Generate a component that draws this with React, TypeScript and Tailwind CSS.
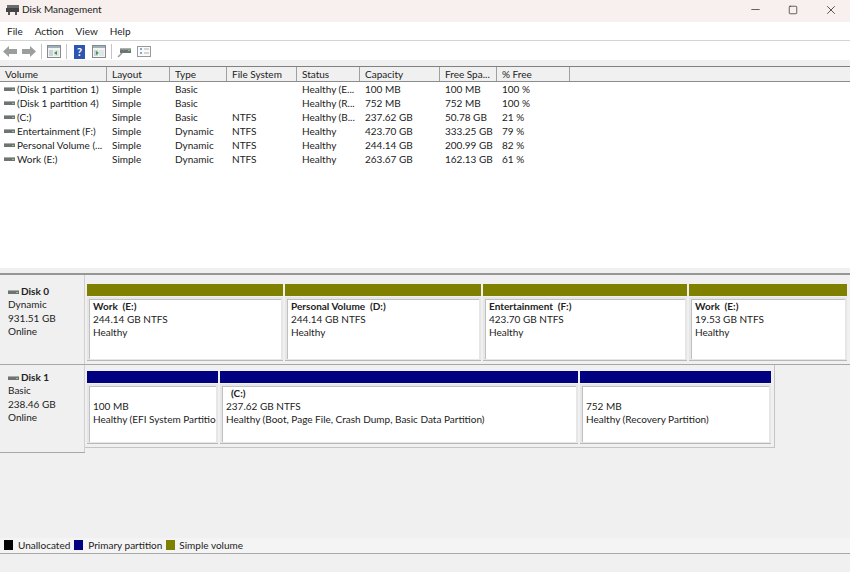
import { Minus, Square, X } from 'lucide-react';

const COLUMNS = [
  { label: 'Volume', width: 'w-[107px]' },
  { label: 'Layout', width: 'w-[63px]' },
  { label: 'Type', width: 'w-[57px]' },
  { label: 'File System', width: 'w-[70px]' },
  { label: 'Status', width: 'w-[63px]' },
  { label: 'Capacity', width: 'w-[80px]' },
  { label: 'Free Spa...', width: 'w-[57px]' },
  { label: '% Free', width: 'w-[73px]' },
];

const VOLUMES = [
  ['(Disk 1 partition 1)', 'Simple', 'Basic', '', 'Healthy (E...', '100 MB', '100 MB', '100 %'],
  ['(Disk 1 partition 4)', 'Simple', 'Basic', '', 'Healthy (R...', '752 MB', '752 MB', '100 %'],
  ['(C:)', 'Simple', 'Basic', 'NTFS', 'Healthy (B...', '237.62 GB', '50.78 GB', '21 %'],
  ['Entertainment (F:)', 'Simple', 'Dynamic', 'NTFS', 'Healthy', '423.70 GB', '333.25 GB', '79 %'],
  ['Personal Volume (...', 'Simple', 'Dynamic', 'NTFS', 'Healthy', '244.14 GB', '200.99 GB', '82 %'],
  ['Work (E:)', 'Simple', 'Dynamic', 'NTFS', 'Healthy', '263.67 GB', '162.13 GB', '61 %'],
];

function DriveIcon() {
  return (
    <svg width="11" height="6" viewBox="0 0 11 6" className="shrink-0">
      <rect x="0" y="1" width="11" height="4" fill="#6f7472" />
      <rect x="0" y="1" width="11" height="1" fill="#a8adab" />
      <rect x="8" y="3" width="2" height="1" fill="#7fd07f" />
    </svg>
  );
}

function WindowIcon({ accent }: { accent: string }) {
  return (
    <svg width="14" height="13" viewBox="0 0 14 13">
      <rect x="0.5" y="0.5" width="13" height="12" fill="#f4f4f4" stroke="#8a8a8a" />
      <rect x="1" y="1" width="12" height="2" fill="#9fb0bd" />
      <rect x="2" y="5" width="4" height="6" fill="#c9d3da" />
      <rect x="7" y="5" width="5" height="6" fill="#dfe6ea" />
      <path d={accent === 'left' ? 'M10 6v4l-3-2z' : 'M4 6v4l3-2z'} fill="#3f9a3f" />
    </svg>
  );
}

function ToolbarIcons() {
  return (
    <div className="flex items-center h-[19px] pl-[3px] pt-[2px]">
      <svg width="14" height="11" viewBox="0 0 14 11">
        <path d="M0 5.500 6 0v3h8v5H6v3z" fill="#9a9f9c" />
      </svg>
      <svg width="14" height="11" viewBox="0 0 14 11" className="ml-[5px]">
        <path d="M14 5.500 8 0v3H0v5h8v3z" fill="#9a9f9c" />
      </svg>
      <div className="w-px h-[15px] bg-[#c4c4c4] ml-[5px]" />
      <div className="ml-[5px] flex"><WindowIcon accent="left" /></div>
      <div className="w-px h-[15px] bg-[#c4c4c4] ml-[5px]" />
      <div className="ml-[7px] w-[11px] h-[14px] bg-[#2f55b0] text-white text-[11px] leading-[14px] font-bold text-center">?</div>
      <div className="ml-[7px] flex"><WindowIcon accent="right" /></div>
      <div className="w-px h-[15px] bg-[#c4c4c4] ml-[5px]" />
      <svg width="14" height="12" viewBox="0 0 14 12" className="ml-[5px]">
        <path d="M1 11 5 7" stroke="#9a9a9a" strokeWidth="1.500" />
        <rect x="3" y="2" width="11" height="5" fill="#6f7472" />
        <rect x="3" y="2" width="11" height="1.500" fill="#a9b3ae" />
        <rect x="11" y="4" width="2" height="1" fill="#6fd08a" />
      </svg>
      <svg width="14" height="11" viewBox="0 0 14 11" className="ml-[6px]">
        <rect x="0.5" y="0.5" width="13" height="10" fill="#fafafa" stroke="#9a9a9a" />
        <path d="M3 3h2M3 7h2" stroke="#5f8fc0" strokeWidth="1.500" />
        <path d="M7 3h5M7 7h5" stroke="#b0b0b0" />
      </svg>
    </div>
  );
}

function Partition({ width, color, title, size, status, indent }: {
  width: string;
  color: string;
  title?: string;
  size: string;
  status: string;
  indent?: boolean;
}) {
  return (
    <div className={`${width} h-full flex flex-col shrink-0`}>
      <div className={`h-[12px] ${color}`} />
      <div className="flex-1 mt-[1px] bg-[#e6e6e6] p-[2px] pb-[1px] border-b border-[#b8b8b8]">
        <div className="h-full bg-white border-l border-t border-[#c0c0c0] pl-[3px] leading-[13px] overflow-hidden whitespace-nowrap">
          <div className={`h-[13px] font-bold whitespace-pre ${indent ? 'pl-[5px]' : ''}`}>{title}</div>
          <div>{size}</div>
          <div>{status}</div>
        </div>
      </div>
    </div>
  );
}

function DiskLabel({ name, kind, size, top }: { name: string; kind: string; size: string; top: string }) {
  return (
    <div className={`w-[85px] shrink-0 bg-[#f0f0f0] pl-[8px] ${top} leading-[13.4px] border-r border-[#d0d0d0]`}>
      <div className="flex items-center gap-[2px] font-bold">
        <DriveIcon />
        <span>{name}</span>
      </div>
      <div>{kind}</div>
      <div>{size}</div>
      <div>Online</div>
    </div>
  );
}

export default function App() {
  return (
    <div className="w-[850px] h-[572px] flex flex-col overflow-hidden bg-[#f0f0f0] text-[10px] text-[#222] font-['Lato',sans-serif]">
      <div className="h-[22px] shrink-0 bg-[#f7f0ee] flex items-center pb-[3px]">
        <svg width="15" height="12" viewBox="0 0 15 12" className="ml-[5px] mr-[2px]">
          <rect x="2" y="1" width="12" height="3" fill="#6b6b6b" />
          <rect x="1" y="4" width="13" height="4" fill="#444" />
          <rect x="3" y="8" width="2" height="3" fill="#555" />
          <rect x="10" y="8" width="2" height="3" fill="#555" />
        </svg>
        <span>Disk Management</span>
        <div className="ml-auto flex items-center text-[#333]">
          <Minus size={13} strokeWidth={1.4} />
          <Square size={10} strokeWidth={1.8} className="ml-[26px]" />
          <X size={14} strokeWidth={1.4} className="ml-[26px] mr-[12px]" />
        </div>
      </div>

      <div className="h-[18px] shrink-0 bg-white flex items-center pl-[7px] gap-[12px] pt-[1px]">
        <span>File</span>
        <span>Action</span>
        <span>View</span>
        <span>Help</span>
      </div>
      <div className="h-px shrink-0 bg-[#d4d4d4]" />
      <div className="shrink-0 bg-white"><ToolbarIcons /></div>
      <div className="h-[6px] shrink-0 bg-[#f0f0f0]" />

      <div className="h-[202px] shrink-0 bg-white flex flex-col border-t border-[#808080]">
        <div className="h-[15px] shrink-0 flex bg-[#f0f0f0] border-b border-[#8c8c8c]">
          {COLUMNS.map((col) => (
            <div key={col.label} className={`${col.width} pl-[5px] pt-[1px] leading-[13px] border-r border-[#a0a0a0] whitespace-nowrap overflow-hidden`}>
              {col.label}
            </div>
          ))}
        </div>
        <div>
          {VOLUMES.map((row) => (
            <div key={row[0]} className="h-[14px] flex leading-[14px]">
              {row.map((cell, i) => (
                <div key={i} className={`${COLUMNS[i].width} ${i === 0 ? 'pl-[4px] flex items-center gap-[2px]' : 'pl-[5px]'} whitespace-nowrap overflow-hidden`}>
                  {i === 0 && <DriveIcon />}
                  {cell}
                </div>
              ))}
            </div>
          ))}
        </div>
      </div>

      <div className="h-[5px] shrink-0 bg-[#f0f0f0]" />
      <div className="h-[2px] shrink-0 bg-[#808080] opacity-80" />

      <div className="h-[90px] shrink-0 flex border-b border-[#a8a8a8]">
        <DiskLabel name="Disk 0" kind="Dynamic" size="931.51 GB" top="pt-[10px]" />
        <div className="flex-1 pl-[2px] pt-[9px] pb-[3px] flex gap-[2px] pr-[2px] bg-[#f0f0f0]">
          <Partition width="w-[196px]" color="bg-[#808000]" title="Work  (E:)" size="244.14 GB NTFS" status="Healthy" />
          <Partition width="w-[196px]" color="bg-[#808000]" title="Personal Volume  (D:)" size="244.14 GB NTFS" status="Healthy" />
          <Partition width="w-[204px]" color="bg-[#808000]" title="Entertainment  (F:)" size="423.70 GB NTFS" status="Healthy" />
          <Partition width="w-[158px]" color="bg-[#808000]" title="Work  (E:)" size="19.53 GB NTFS" status="Healthy" />
        </div>
      </div>

      <div className="h-[88px] shrink-0 flex">
        <div className="flex border-b border-[#a8a8a8]">
          <DiskLabel name="Disk 1" kind="Basic" size="238.46 GB" top="pt-[6px]" />
        </div>
        <div className="w-[690px] h-[83px] pl-[2px] pt-[6px] pb-[3px] pr-[2px] flex gap-[2px] bg-[#f0f0f0] border-r border-b border-[#c4c4c4]">
          <Partition width="w-[131px]" color="bg-[#000080]" size="100 MB" status="Healthy (EFI System Partitio" />
          <Partition width="w-[358px]" color="bg-[#000080]" title="(C:)" size="237.62 GB NTFS" status="Healthy (Boot, Page File, Crash Dump, Basic Data Partition)" indent />
          <Partition width="w-[191px]" color="bg-[#000080]" size="752 MB" status="Healthy (Recovery Partition)" />
        </div>
      </div>

      <div className="flex-1" />
      <div className="h-[16px] shrink-0 flex items-center pl-[4px] pb-[1px] border-b border-[#a8a8a8] bg-[#f4f4f4]">
        <span className="w-[9px] h-[10px] bg-black" />
        <span className="ml-[5px]">Unallocated</span>
        <span className="ml-[4px] w-[9px] h-[10px] bg-[#000080]" />
        <span className="ml-[5px]">Primary partition</span>
        <span className="ml-[4px] w-[9px] h-[10px] bg-[#808000]" />
        <span className="ml-[4px]">Simple volume</span>
      </div>
      <div className="h-[18px] shrink-0" />
    </div>
  );
}
